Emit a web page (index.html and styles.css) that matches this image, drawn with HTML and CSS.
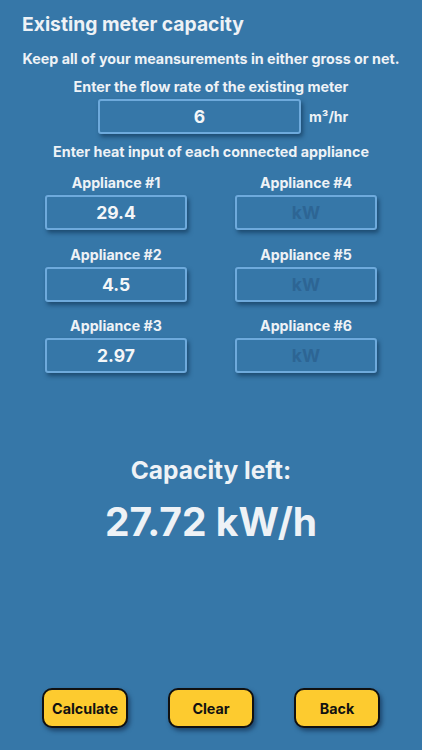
FILE: index.html
```html
<!DOCTYPE html>
<html lang="en">
  <head>
    <meta charset="UTF-8" />
    <meta name="viewport" content="width=device-width, initial-scale=1.0" />
    <title>Existing meter capacity</title>
    <link rel="stylesheet" href="styles.css">
  </head>
  <body>
    <main class="screen">
      <h1 class="title">Existing meter capacity</h1>
      <p class="note">Keep all of your meansurements in either gross or net.</p>

      <p class="label">Enter the flow rate of the existing meter</p>
      <div class="flow-row">
        <input class="field flow-field" type="text" value="6" />
        <span class="unit">m³/hr</span>
      </div>

      <p class="label heat-label">Enter heat input of each connected appliance</p>

      <div class="appliances">
        <label class="appliance">Appliance #1<input class="field" type="text" value="29.4" /></label>
        <label class="appliance">Appliance #4<input class="field" type="text" placeholder="kW" /></label>
        <label class="appliance">Appliance #2<input class="field" type="text" value="4.5" /></label>
        <label class="appliance">Appliance #5<input class="field" type="text" placeholder="kW" /></label>
        <label class="appliance">Appliance #3<input class="field" type="text" value="2.97" /></label>
        <label class="appliance">Appliance #6<input class="field" type="text" placeholder="kW" /></label>
      </div>

      <section class="result">
        <h2 class="result-label">Capacity left:</h2>
        <p class="result-value">27.72 kW/h</p>
      </section>

      <footer class="actions">
        <button class="btn">Calculate</button>
        <button class="btn">Clear</button>
        <button class="btn">Back</button>
      </footer>
    </main>
  </body>
</html>
```

FILE: styles.css
```css
* {
  box-sizing: border-box;
}

body {
  margin: 0;
  background: #3677a8;
  font-family: Inter, "Open Sans", sans-serif;
  color: #eef2f6;
}

.screen {
  display: flex;
  flex-direction: column;
  height: 750px;
  padding: 12px 0 0;
}

.title {
  margin: 0 0 0 22px;
  font-size: 19.3px;
  font-weight: 700;
  line-height: 24px;
}

.note {
  margin: 14px 0 0;
  text-align: center;
  font-size: 14.3px;
  font-weight: 700;
  line-height: 18px;
}

.label {
  margin: 10px 0 0;
  text-align: center;
  font-size: 14.3px;
  font-weight: 650;
  line-height: 18px;
}

.flow-row {
  display: flex;
  align-items: center;
  margin: 3px 0 0 98px;
  gap: 8px;
}

.field {
  width: 142px;
  height: 35px;
  border: 2px solid #6eaadc;
  border-radius: 3px;
  background: #3677a8;
  box-shadow: 2px 3px 4px rgba(10, 40, 70, 0.55);
  color: #f4f6f8;
  font-family: inherit;
  font-size: 17.5px;
  font-weight: 700;
  text-align: center;
  outline: none;
}

.field::placeholder {
  color: #2d6594;
}

.flow-field {
  width: 203px;
}

.unit {
  font-size: 14px;
  font-weight: 650;
}

.heat-label {
  margin-top: 9px;
}

.appliances {
  display: grid;
  grid-template-columns: 142px 142px;
  column-gap: 48px;
  row-gap: 15.5px;
  margin: 13px 0 0 45px;
}

.appliance {
  display: flex;
  flex-direction: column;
  align-items: center;
  gap: 3px;
  font-size: 14.2px;
  font-weight: 650;
  line-height: 18px;
}

.result {
  display: flex;
  flex-direction: column;
  align-items: center;
  margin-top: 82px;
}

.result-label {
  margin: 0;
  font-size: 24.5px;
  font-weight: 700;
  line-height: 30px;
}

.result-value {
  margin: 14px 0 0;
  font-size: 39px;
  font-weight: 700;
  line-height: 46px;
}

.actions {
  display: flex;
  justify-content: space-between;
  margin-top: auto;
  padding: 0 42px 22px 42px;
}

.btn {
  width: 86px;
  height: 40px;
  border: 2px solid #111;
  border-radius: 10px;
  background: #fdcb2f;
  box-shadow: 2px 3px 4px rgba(10, 30, 60, 0.55);
  color: #111;
  font-family: inherit;
  font-size: 14.3px;
  font-weight: 700;
}
```
